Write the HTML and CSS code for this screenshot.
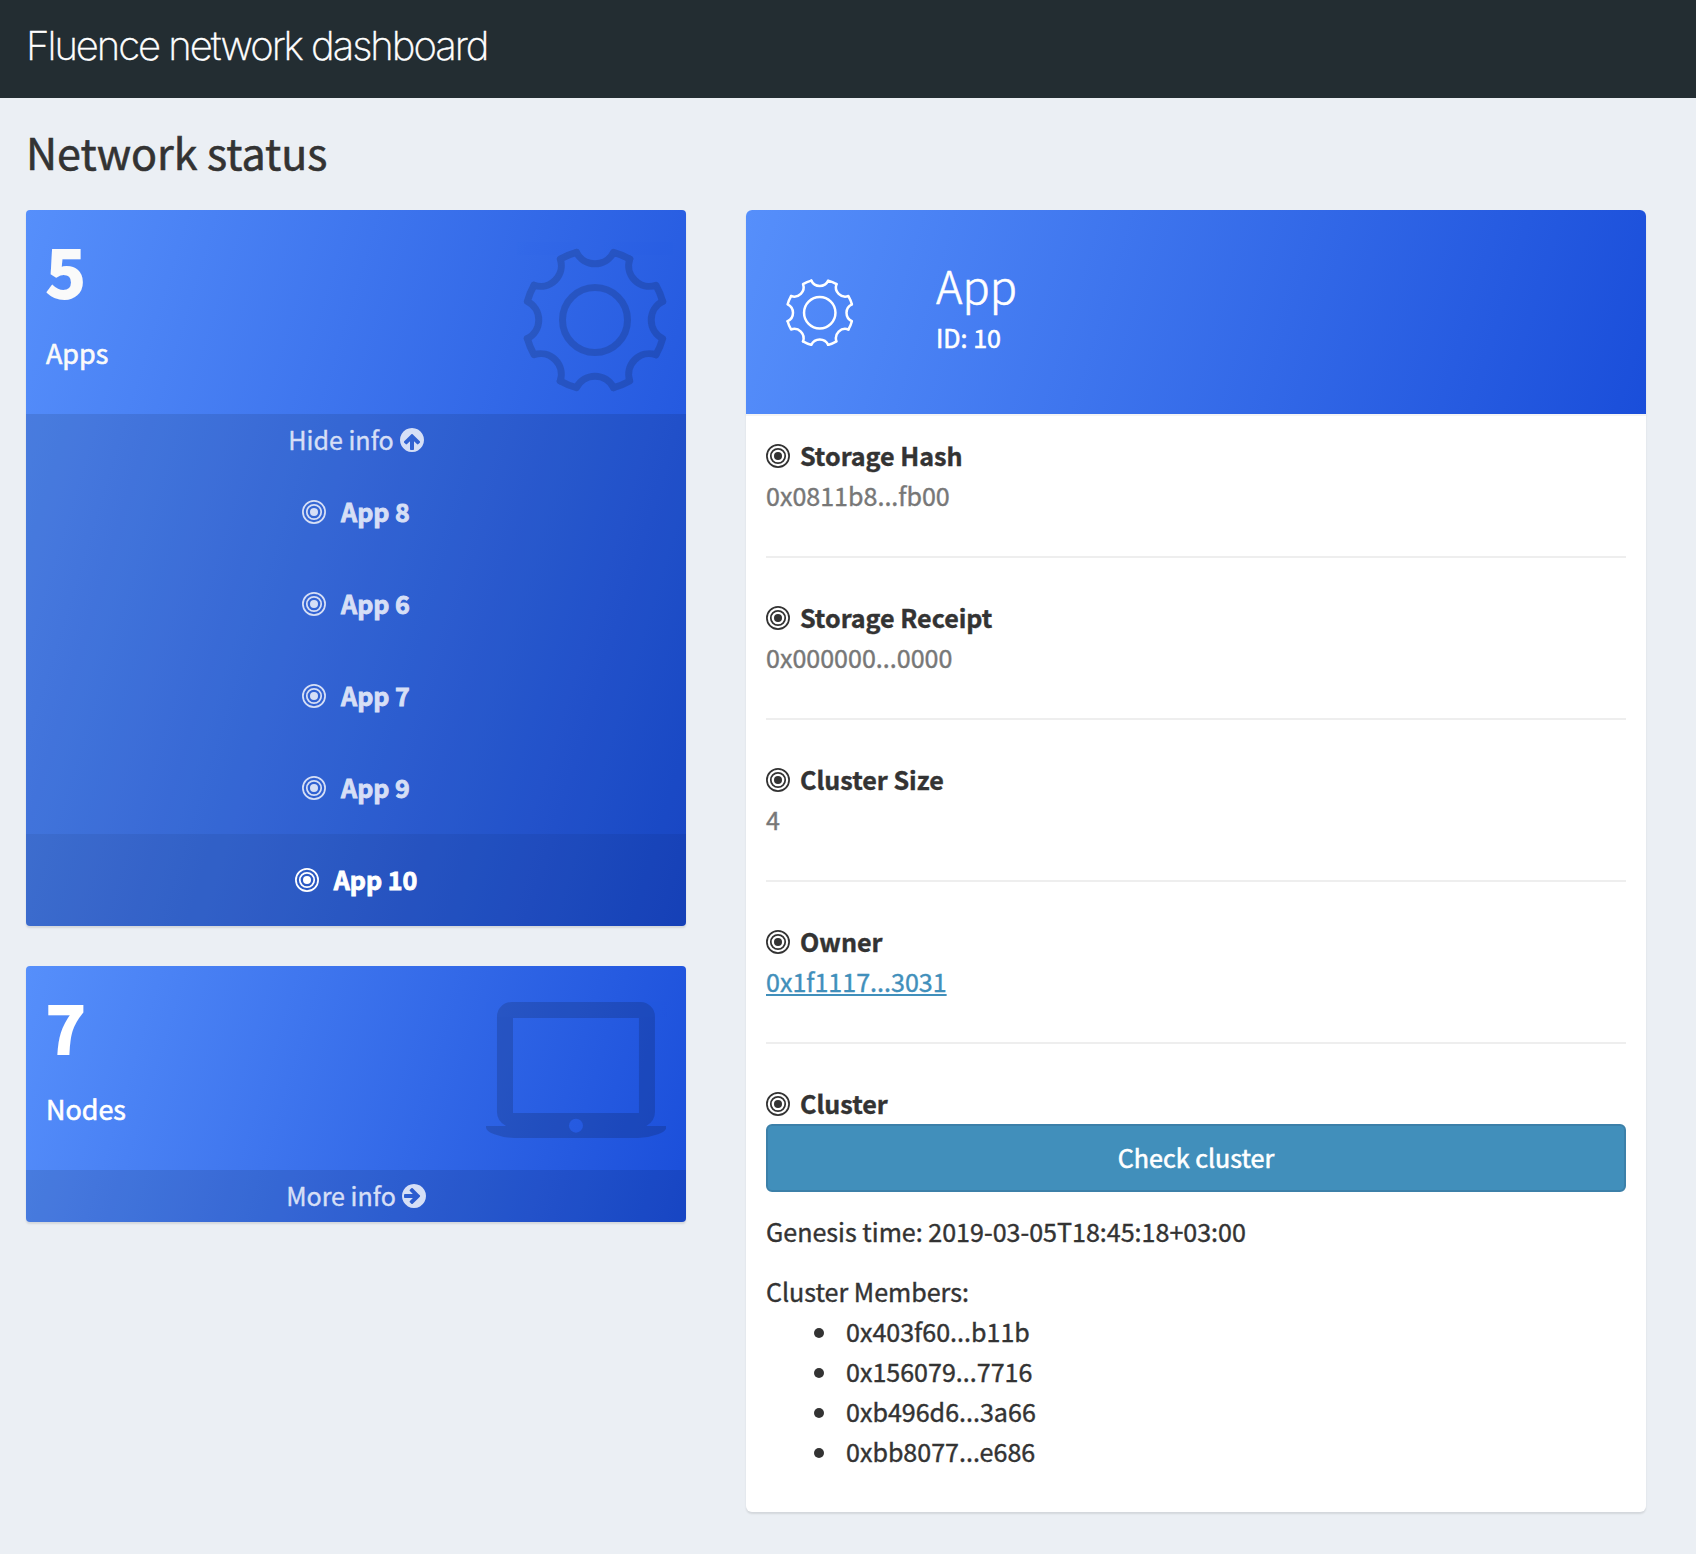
FILE: index.html
```html
<!DOCTYPE html>
<html lang="en">
<head>
<meta charset="utf-8">
<title>Fluence network dashboard</title>
<link rel="stylesheet" href="styles.css">
</head>
<body>
<svg class="sprite" aria-hidden="true">
  <symbol id="target" viewBox="0 0 24 24">
    <circle cx="12" cy="12" r="11.1" fill="none" stroke="currentColor" stroke-width="1.75"/>
    <circle cx="12" cy="12" r="7.2" fill="none" stroke="currentColor" stroke-width="1.75"/>
    <circle cx="12" cy="12" r="4" fill="currentColor"/>
  </symbol>
  <symbol id="arrow" viewBox="128 128 1536 1536">
    <path fill="currentColor" stroke="none" d="M1285 896q0-27-18-45l-91-91-362-362q-18-18-45-18t-45 18l-91 91q-18 18-18 45t18 45l189 189h-502q-26 0-45 19t-19 45v128q0 26 19 45t45 19h502l-189 189q-18 18-18 45t18 45l91 91q18 18 45 18t45-18l362-362 91-91q18-18 18-45zm379 0q0 209-103 385.500t-279.500 279.500-385.500 103-385.500-103-279.500-279.500-103-385.500 103-385.500 279.500-279.500 385.500-103 385.500 103 279.500 279.500 103 385.500z" transform="translate(0 0)"/>
  </symbol>
  <path id="tooth" d="M-55.650-203A62.300 62.300 0 0 0 55.650-203A210.500 210.500 0 0 1 104.200-182.900"/>
  <path id="tooth-thin" d="M-54.070-205.500A59.800 59.800 0 0 0 54.070-205.500A212.500 212.500 0 0 1 107.100-183.600"/>
</svg>

<header class="topbar"><span class="brand">Fluence network dashboard</span></header>

<main class="content">
  <h1 class="page-title">Network status</h1>
  <div class="columns">
    <div class="sidebar">
      <section class="tile">
        <div class="tile-head">
          <div class="tile-text tile-text-muted">
            <div class="count">5</div>
            <div class="label">Apps</div>
          </div>
          <svg class="tile-gear" viewBox="-216 -216 432 432" fill="none" stroke="#000" stroke-width="21" stroke-linejoin="round" stroke-linecap="round">
            <circle r="97.500"/>
            <use href="#tooth"/>
            <use href="#tooth" transform="rotate(45)"/>
            <use href="#tooth" transform="rotate(90)"/>
            <use href="#tooth" transform="rotate(135)"/>
            <use href="#tooth" transform="rotate(180)"/>
            <use href="#tooth" transform="rotate(225)"/>
            <use href="#tooth" transform="rotate(270)"/>
            <use href="#tooth" transform="rotate(315)"/>
          </svg>
        </div>
        <div class="tile-foot">
          <div class="toggle"><span>Hide info</span><svg class="icon icon-up"><use href="#arrow"/></svg></div>
          <div class="app-row"><svg class="icon"><use href="#target"/></svg><span>App 8</span></div>
          <div class="app-row"><svg class="icon"><use href="#target"/></svg><span>App 6</span></div>
          <div class="app-row"><svg class="icon"><use href="#target"/></svg><span>App 7</span></div>
          <div class="app-row"><svg class="icon"><use href="#target"/></svg><span>App 9</span></div>
          <div class="app-row active"><svg class="icon"><use href="#target"/></svg><span>App 10</span></div>
        </div>
      </section>

      <section class="tile">
        <div class="tile-head">
          <div class="tile-text">
            <div class="count">7</div>
            <div class="label">Nodes</div>
          </div>
          <svg class="tile-laptop" viewBox="0 0 541 408">
            <path fill-rule="evenodd" d="M77 0H463A44 44 0 0 1 507 44V330Q507 357 481 372H541V376Q541 388 516 397Q486 408 456 408H85Q55 408 25 397Q0 388 0 376V372H60Q33 357 33 330V44A44 44 0 0 1 77 0ZM81 48V333H459V48ZM270 350A21 21 0 1 0 270 392A21 21 0 1 0 270 350Z"/>
          </svg>
        </div>
        <div class="tile-foot">
          <div class="toggle"><span>More info</span><svg class="icon"><use href="#arrow"/></svg></div>
        </div>
      </section>
    </div>

    <section class="panel">
      <div class="panel-head">
        <svg class="panel-gear" viewBox="-216 -216 432 432" fill="none" stroke="#fff" stroke-width="16" stroke-linejoin="round" stroke-linecap="round">
          <circle r="100.500"/>
          <use href="#tooth-thin"/>
          <use href="#tooth-thin" transform="rotate(45)"/>
          <use href="#tooth-thin" transform="rotate(90)"/>
          <use href="#tooth-thin" transform="rotate(135)"/>
          <use href="#tooth-thin" transform="rotate(180)"/>
          <use href="#tooth-thin" transform="rotate(225)"/>
          <use href="#tooth-thin" transform="rotate(270)"/>
          <use href="#tooth-thin" transform="rotate(315)"/>
        </svg>
        <div class="panel-name">
          <h2 class="panel-title">App</h2>
          <div class="panel-id">ID: 10</div>
        </div>
      </div>
      <div class="panel-body">
        <div class="field">
          <div class="field-name"><svg class="icon"><use href="#target"/></svg><span>Storage Hash</span></div>
          <div class="line muted">0x0811b8...fb00</div>
        </div>
        <div class="field">
          <div class="field-name"><svg class="icon"><use href="#target"/></svg><span>Storage Receipt</span></div>
          <div class="line muted">0x000000...0000</div>
        </div>
        <div class="field">
          <div class="field-name"><svg class="icon"><use href="#target"/></svg><span>Cluster Size</span></div>
          <div class="line muted">4</div>
        </div>
        <div class="field">
          <div class="field-name"><svg class="icon"><use href="#target"/></svg><span>Owner</span></div>
          <div class="line"><a class="link" href="#">0x1f1117...3031</a></div>
        </div>
        <div class="field-name"><svg class="icon"><use href="#target"/></svg><span>Cluster</span></div>
        <button class="button" type="button">Check cluster</button>
        <p class="line genesis">Genesis time: 2019-03-05T18:45:18+03:00</p>
        <p class="line">Cluster Members:</p>
        <ul class="members">
          <li class="line">0x403f60...b11b</li>
          <li class="line">0x156079...7716</li>
          <li class="line">0xb496d6...3a66</li>
          <li class="line">0xbb8077...e686</li>
        </ul>
      </div>
    </section>
  </div>
</main>
</body>
</html>
```
FILE: styles.css
```css
* { box-sizing: border-box; }

body {
  margin: 0;
  min-height: 1554px;
  background: #ebeff4;
  color: #333;
  font-family: "Noto Sans CJK SC", "Noto Sans", sans-serif;
  font-size: 25.07px;
  line-height: 38px;
  -webkit-text-stroke: .4px currentColor;
}

h1, h2, p, ul { margin: 0; padding: 0; }

.sprite { position: absolute; width: 0; height: 0; }

.icon { width: 24px; height: 24px; flex: none; display: block; }
.icon-up { transform: rotate(-90deg); }

.topbar {
  height: 98px;
  padding: 24px 26px 0;
  background: #232d32;
}
.brand {
  display: block;
  color: #fff;
  font-family: Inter, "Liberation Sans", sans-serif;
  font-weight: 200;
  font-size: 40px;
  line-height: 44px;
  letter-spacing: -2.02px;
  white-space: nowrap;
}

.content { padding: 27px 50px 0 26px; }
.page-title {
  height: 85px;
  font-size: 43px;
  font-weight: 400;
  line-height: 52px;
  -webkit-text-stroke-width: .6px;
}

.columns {
  display: grid;
  grid-template-columns: 660px 900px;
  column-gap: 60px;
  align-items: start;
}
.sidebar { display: grid; row-gap: 40px; }

.tile {
  overflow: hidden;
  border-radius: 4px;
  background: linear-gradient(107deg, #568ffb, #1a4eda);
  box-shadow: 0 2px 2px rgba(0, 0, 0, .1);
  color: #fff;
}
.tile-head {
  display: flex;
  justify-content: space-between;
  height: 204px;
  padding: 20px;
}
.tile-text-muted { color: #fafafa; }
.count {
  height: 103px;
  font-size: 67px;
  font-weight: 700;
  line-height: 78px;
  -webkit-text-stroke-width: 2px;
}
.label { font-size: 26.9px; line-height: 40px; -webkit-text-stroke-width: .6px; }
.tile-gear { width: 144px; height: 144px; margin: 18px -1px 0 0; opacity: .15; }
.tile-laptop { width: 180.300px; height: 136px; margin-top: 16px; opacity: .15; }

.tile-foot { background: rgba(0, 0, 0, .1); color: #d6dff6; }
.toggle {
  display: flex;
  justify-content: center;
  align-items: center;
  gap: 6px;
  height: 52px;
}
.toggle span, .app-row span, .field-name span { padding-bottom: 2px; }
.app-row {
  display: flex;
  justify-content: center;
  align-items: center;
  gap: 15px;
  height: 92px;
  font-weight: 700;
  -webkit-text-stroke-width: .9px;
}
.app-row.active { background: rgba(0, 0, 0, .06); color: #fff; }

.panel {
  overflow: hidden;
  border-radius: 6px;
  background: #fff;
  box-shadow: 0 2px 2px rgba(0, 0, 0, .1);
}
.panel-head {
  display: flex;
  height: 204px;
  padding: 40px;
  background: linear-gradient(107deg, #568ffb, #1a4eda);
  color: #fff;
}
.panel-gear { width: 67.500px; height: 67.500px; margin-top: 28.500px; }
.panel-name { margin-left: 82.500px; padding-top: 7px; }
.panel-title { font-size: 45px; font-weight: 300; line-height: 56px; -webkit-text-stroke-width: .6px; }
.panel-id { margin-top: 5px; line-height: 38px; -webkit-text-stroke-width: .6px; }

.panel-body { padding: 20px; border-top: 2px solid #f4f4f4; }
.field {
  margin-bottom: 40px;
  padding-bottom: 40px;
  border-bottom: 2px solid #eee;
}
.field-name {
  display: flex;
  align-items: center;
  gap: 10px;
  height: 40px;
  font-weight: 700;
}
.line { padding-bottom: 2px; }
.muted { color: #777; }
.link {
  color: #418fbb;
  text-decoration: underline;
  text-decoration-thickness: 2px;
  text-decoration-skip-ink: none;
  text-underline-offset: 2px;
}

.button {
  display: block;
  width: 100%;
  height: 68px;
  margin-bottom: 20px;
  padding: 0 0 2px;
  border: 2px solid #3c80a9;
  border-radius: 6px;
  background: #418fbb;
  color: #fff;
  font: inherit;
  -webkit-text-stroke-width: .6px;
}
.genesis { margin-bottom: 20px; }
.members { margin-bottom: 20px; padding-left: 80px; list-style: none; }
.members li::before {
  content: "";
  display: inline-block;
  width: 10px;
  height: 10px;
  margin: 0 22px 4px -32px;
  border-radius: 50%;
  background: #333;
}
```
